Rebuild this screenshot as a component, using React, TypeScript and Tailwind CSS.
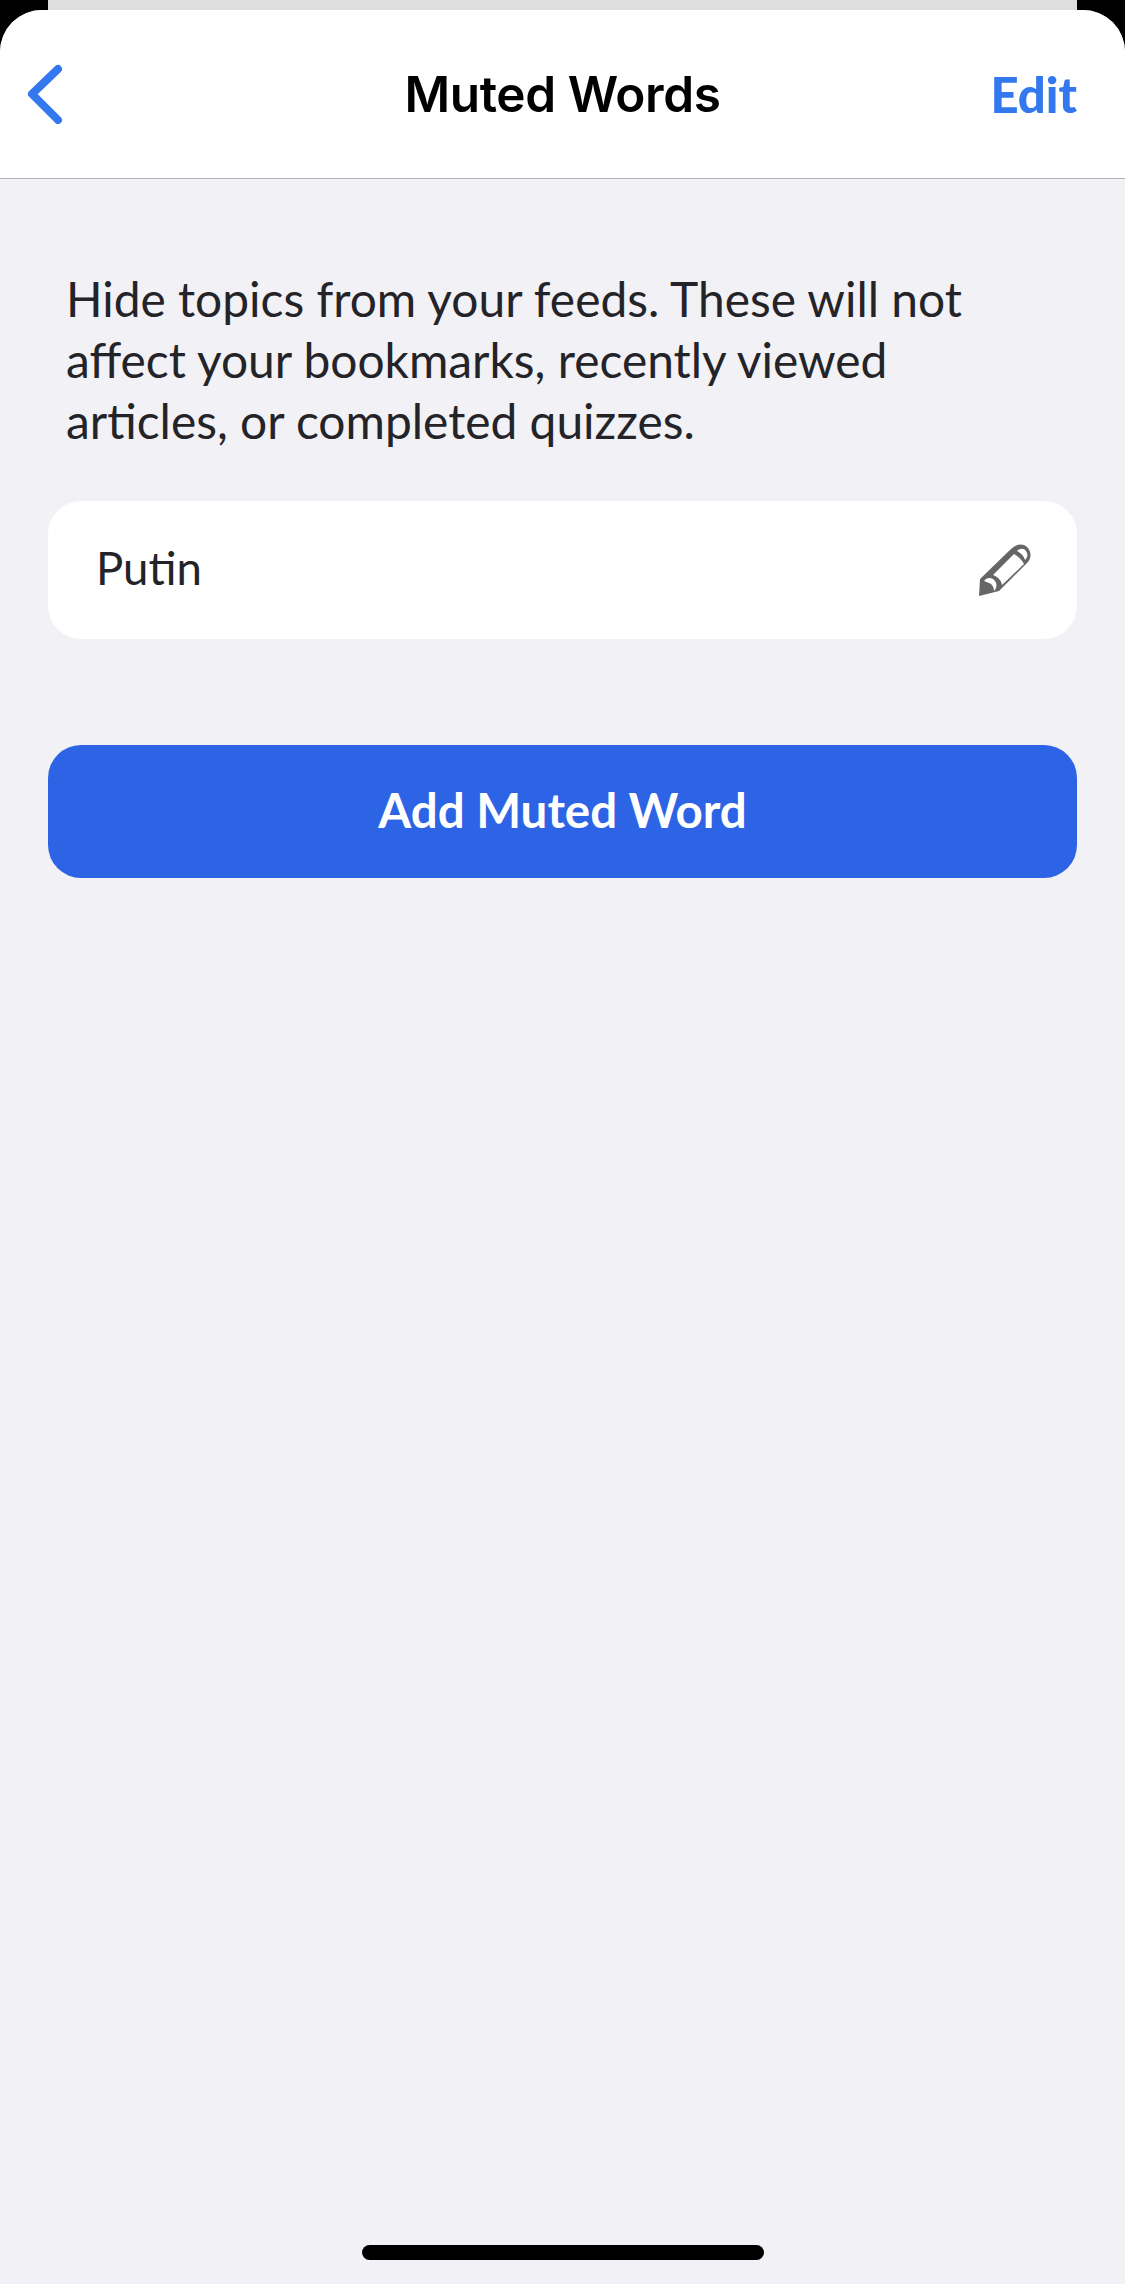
function BackIcon() {
  return (
    <svg width="40" height="60" viewBox="0 0 40 60" fill="none">
      <path
        d="M32 5 L6 30 L32 56"
        stroke="#3478f0"
        strokeWidth="8"
        strokeLinecap="round"
        strokeLinejoin="round"
      />
    </svg>
  );
}

function PencilIcon() {
  return (
    <svg width="52" height="52" viewBox="0 0 52 52" fill="none">
      <path
        d="M1 35 L32 5 C37 0 44 -1 48 3 C52 7 53 13 49 18 L20 47 L0 52 Z"
        fill="#666666"
      />
      <path d="M14 31 L35 10 C39 12 43 16 45 20 L23 41 C22 36 19 33 14 31 Z" fill="#ffffff" />
      <path d="M38 7 C41 4 45 4 47 7 C49 10 49 13 46 16 C45 12 42 9 38 7 Z" fill="#ffffff" />
      <path d="M5 37 C7 34 11 33 14 35 C18 38 19 43 15 47 C15 43 13 40 10 39 C8 38 7 38 5 37 Z" fill="#ffffff" />
    </svg>
  );
}

export default function App() {
  return (
    <div className="flex h-[2284px] w-[1125px] flex-col bg-black font-['Lato','Noto_Sans',sans-serif]">
      <div className="mx-[48px] h-[10px] bg-[#dedede]" />
      <div className="flex flex-1 flex-col overflow-hidden rounded-t-[42px] bg-[#f1f1f6]">
        <header className="grid h-[169px] grid-cols-[1fr_auto_1fr] items-center border-b border-[#b0b0b5] bg-white px-[26px]">
          <BackIcon />
          <h1 className="font-['Inter',sans-serif] text-[49.5px] font-semibold tracking-[-0.4px] text-black">
            Muted Words
          </h1>
          <button type="button" className="mr-[22px] justify-self-end pt-[2px] text-[49px] font-black text-[#3478f0]">
            Edit
          </button>
        </header>

        <main className="flex flex-1 flex-col px-[48px]">
          <p className="mt-[89px] px-[18px] text-[47.9px] leading-[61px] text-[#242428]">
            Hide topics from your feeds. These will not
            <br />
            affect your bookmarks, recently viewed
            <br />
            articles, or completed quizzes.
          </p>

          <div className="mt-[50px] flex h-[138px] items-center justify-between rounded-[33px] bg-white pl-[48px] pr-[46px]">
            <span className="pb-[4px] text-[45.5px] text-[#242428]">Putin</span>
            <PencilIcon />
          </div>

          <button
            type="button"
            className="mt-[106px] h-[133px] w-full rounded-[33px] bg-[#2d64e6] pb-[3px] text-[47.5px] font-bold text-white"
          >
            Add Muted Word
          </button>

          <div className="mt-auto mb-[24px] h-[15px] w-[402px] self-center rounded-full bg-black" />
        </main>
      </div>
    </div>
  );
}
